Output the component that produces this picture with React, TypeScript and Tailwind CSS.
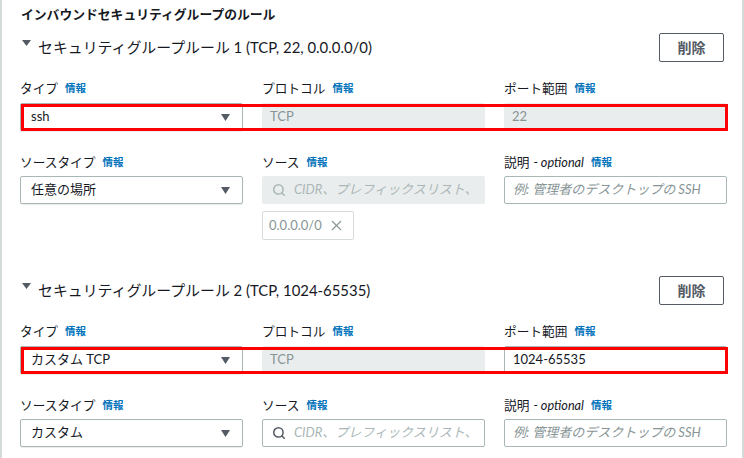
import React from "react";
import { Search, X } from "lucide-react";

function Caret() {
  return (
    <svg width="9" height="7" viewBox="0 0 9 7" className="shrink-0">
      <polygon points="0,0 9,0 4.5,7" fill="#545b64" />
    </svg>
  );
}

function Label({ text, optional }: { text: string; optional?: boolean }) {
  return (
    <div className="flex items-center h-4 leading-4 text-[12.7px] text-[#16191f] whitespace-nowrap">
      <span>{text}</span>
      {optional && <span className="italic ml-[4px]">- optional</span>}
      <span className="ml-[7px] text-[10.5px] font-bold text-[#0073bb]">情報</span>
    </div>
  );
}

function SelectBox({ value }: { value: string }) {
  return (
    <div className="h-[28px] border border-[#aab7b8] rounded-[2px] bg-white flex items-center justify-between pl-[10px] pr-[12px] text-[13px] text-[#16191f] shadow-[0_1px_1px_rgba(0,0,0,0.08)]">
      <span>{value}</span>
      <Caret />
    </div>
  );
}

function Disabled({ value }: { value: string }) {
  return (
    <div className="h-[28px] rounded-[2px] bg-[#eaeded] flex items-center pl-[8px] text-[13px] text-[#879596]">
      {value}
    </div>
  );
}

function TextInput({ value, placeholder }: { value?: string; placeholder?: string }) {
  return (
    <div className="h-[28px] border border-[#aab7b8] rounded-[2px] bg-white flex items-center pl-[8px] text-[13px] whitespace-nowrap overflow-hidden">
      {value ? (
        <span className="text-[#16191f]">{value}</span>
      ) : (
        <span className="italic text-[#879596]">{placeholder}</span>
      )}
    </div>
  );
}

function SearchInput({ disabled }: { disabled?: boolean }) {
  return (
    <div
      className={
        disabled
          ? "h-[28px] rounded-[2px] bg-[#eaeded] flex items-center pl-[10px] text-[13px] whitespace-nowrap overflow-hidden"
          : "h-[28px] border border-[#aab7b8] rounded-[2px] bg-white flex items-center pl-[9px] text-[13px] whitespace-nowrap overflow-hidden"
      }
    >
      <Search size={14} strokeWidth={2.6} color={disabled ? "#aab7b8" : "#545b64"} />
      <span className="ml-[8px] italic text-[#aab7b8]">CIDR、プレフィックスリスト、</span>
    </div>
  );
}

function RuleHeader({ title }: { title: string }) {
  return (
    <div className="h-[29px] flex items-center justify-between pr-[3px]">
      <div className="flex items-center">
        <svg width="9" height="6" viewBox="0 0 9 6" className="ml-[2px] self-start mt-[4px]">
          <polygon points="0,0 9,0 4.5,6" fill="#545b64" />
        </svg>
        <span className="ml-[7px] text-[14.9px] text-[#16191f] whitespace-nowrap">{title}</span>
      </div>
      <button className="h-[29px] w-[65px] border border-[#545b64] rounded-[2px] bg-white text-[14px] font-bold text-[#545b64]">
        削除
      </button>
    </div>
  );
}

function RedBox() {
  return (
    <div className="absolute top-[1px] left-[1px] w-[707px] h-[27px] border-[3px] border-[#ff0000] pointer-events-none" />
  );
}

export default function App() {
  return (
    <div className="w-[744px] h-[458px] overflow-hidden bg-white border-l-2 border-r-2 border-[#d5dbdb] font-['Lato','Noto_Sans_CJK_JP',sans-serif]">
      <div className="pl-[18px] pr-[15px] pt-[5px]">
        <div className="h-[18px] leading-[18px] text-[12.8px] font-bold text-[#16191f] pl-[1px]">
          インバウンドセキュリティグループのルール
        </div>

        {/* Rule 1 */}
        <div className="mt-[10px]">
          <RuleHeader title="セキュリティグループルール 1 (TCP, 22, 0.0.0.0/0)" />
          <div className="grid grid-cols-3 gap-x-[19px] mt-[18px]">
            <Label text="タイプ" />
            <Label text="プロトコル" />
            <Label text="ポート範囲" />
          </div>
          <div className="relative grid grid-cols-3 gap-x-[19px] mt-[7px]">
            <SelectBox value="ssh" />
            <Disabled value="TCP" />
            <Disabled value="22" />
            <RedBox />
          </div>
          <div className="grid grid-cols-3 gap-x-[19px] mt-[23px]">
            <Label text="ソースタイプ" />
            <Label text="ソース" />
            <Label text="説明" optional />
          </div>
          <div className="grid grid-cols-3 gap-x-[19px] mt-[6px]">
            <SelectBox value="任意の場所" />
            <div className="flex flex-col">
              <SearchInput disabled />
              <div className="mt-[7px] h-[29px] w-[92px] border border-[#d5dbdb] rounded-[2px] bg-white flex items-center pl-[6px] text-[13px] text-[#879596]">
                <span>0.0.0.0/0</span>
                <X size={17} strokeWidth={1.5} color="#879596" className="ml-[6px]" />
              </div>
            </div>
            <TextInput placeholder="例: 管理者のデスクトップの SSH" />
          </div>
        </div>

        {/* Rule 2 */}
        <div className="mt-[36px]">
          <RuleHeader title="セキュリティグループルール 2 (TCP, 1024-65535)" />
          <div className="grid grid-cols-3 gap-x-[19px] mt-[18px]">
            <Label text="タイプ" />
            <Label text="プロトコル" />
            <Label text="ポート範囲" />
          </div>
          <div className="relative grid grid-cols-3 gap-x-[19px] mt-[7px]">
            <SelectBox value="カスタム TCP" />
            <Disabled value="TCP" />
            <TextInput value="1024-65535" />
            <RedBox />
          </div>
          <div className="grid grid-cols-3 gap-x-[19px] mt-[23px]">
            <Label text="ソースタイプ" />
            <Label text="ソース" />
            <Label text="説明" optional />
          </div>
          <div className="grid grid-cols-3 gap-x-[19px] mt-[6px]">
            <SelectBox value="カスタム" />
            <SearchInput />
            <TextInput placeholder="例: 管理者のデスクトップの SSH" />
          </div>
        </div>
      </div>
    </div>
  );
}
